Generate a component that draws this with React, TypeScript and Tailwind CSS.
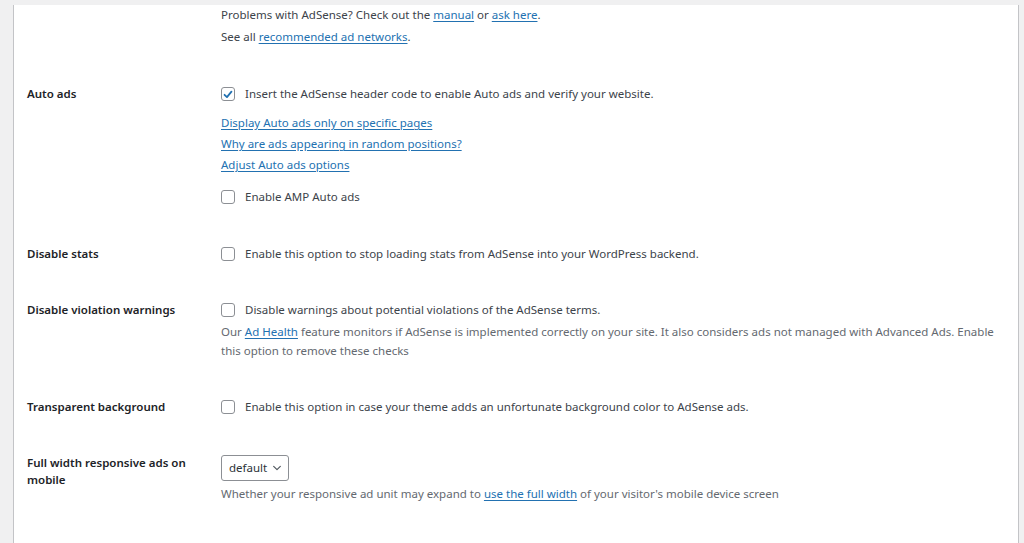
const font = { fontFamily: '"Noto Sans", "Open Sans", sans-serif' };

function Checkbox({ checked = false }: { checked?: boolean }) {
  return (
    <span className="inline-flex h-[14px] w-[14px] shrink-0 items-center justify-center rounded-[3px] border border-[#8c8f94] bg-white">
      {checked && (
        <svg viewBox="0 0 16 16" className="h-[13px] w-[13px]">
          <path d="M3.4 8.4 L6.6 11.4 L12.6 4.2" fill="none" stroke="#2271b1" strokeWidth="2.4" strokeLinecap="round" strokeLinejoin="round" />
        </svg>
      )}
    </span>
  );
}

function CheckLine({ checked, children }: { checked?: boolean; children: React.ReactNode }) {
  return (
    <div className="flex h-[20px] items-center gap-[10px] whitespace-nowrap text-[#3c434a]">
      <Checkbox checked={checked} />
      <span>{children}</span>
    </div>
  );
}

function Link({ children }: { children: React.ReactNode }) {
  return <a className="text-[#2271b1] underline underline-offset-2">{children}</a>;
}

function Row({ label, className, labelClass = "leading-[19px]", children }: { label?: React.ReactNode; className: string; labelClass?: string; children: React.ReactNode }) {
  return (
    <div className={`flex items-start ${className}`}>
      <div className={`w-[194px] shrink-0 pr-4 font-semibold text-[#1d2327] ${labelClass}`}>{label}</div>
      <div className="flex min-w-0 flex-1 flex-col">{children}</div>
    </div>
  );
}

export default function App() {
  return (
    <div className="h-[543px] w-[1024px] overflow-hidden bg-[#f0f0f1] pl-[13px] pr-[5px] text-[11.5px]" style={font}>
      <div className="h-full border-x border-[#c3c4c7] bg-white pl-[13px]">
        {/* intro lines */}
        <Row className="mt-[5px]">
          <p className="leading-[20px] text-[#3c434a]">
            Problems with AdSense? Check out the <Link>manual</Link> or <Link>ask here</Link>.
          </p>
          <p className="mt-[2px] leading-[20px] text-[#3c434a]">
            See all <Link>recommended ad networks</Link>.
          </p>
        </Row>

        {/* Auto ads */}
        <Row label="Auto ads" className="mt-[37px]">
          <CheckLine checked>Insert the AdSense header code to enable Auto ads and verify your website.</CheckLine>
          <div className="mt-[8px] flex flex-col items-start leading-[21px]">
            <Link>Display Auto ads only on specific pages</Link>
            <Link>Why are ads appearing in random positions?</Link>
            <Link>Adjust Auto ads options</Link>
          </div>
          <div className="mt-[12px]">
            <CheckLine>Enable AMP Auto ads</CheckLine>
          </div>
        </Row>

        <Row label="Disable stats" className="mt-[37px]">
          <CheckLine>Enable this option to stop loading stats from AdSense into your WordPress backend.</CheckLine>
        </Row>

        <Row label="Disable violation warnings" className="mt-[36px]">
          <CheckLine>Disable warnings about potential violations of the AdSense terms.</CheckLine>
          <p className="mt-[2px] whitespace-nowrap leading-[19px] text-[#646970]">
            Our <Link>Ad Health</Link> feature monitors if AdSense is implemented correctly on your site. It also considers ads not managed with Advanced Ads. Enable
            <br />
            this option to remove these checks
          </p>
        </Row>

        <Row label="Transparent background" className="mt-[37px]">
          <CheckLine>Enable this option in case your theme adds an unfortunate background color to AdSense ads.</CheckLine>
        </Row>

        <Row
          label={
            <>
              Full width responsive ads on
              <br />
              mobile
            </>
          }
          labelClass="leading-[17px] -mt-[1px]"
          className="mt-[38px]"
        >
          <div className="flex h-[26px] w-[68px] items-center justify-between rounded-[3px] border border-[#8c8f94] bg-white pl-[7px] pr-[6px] text-[#2c3338]">
            <span>default</span>
            <svg viewBox="0 0 12 12" className="h-[10px] w-[10px]">
              <path d="M2 4 L6 8 L10 4" fill="none" stroke="#50575e" strokeWidth="1.4" strokeLinecap="round" strokeLinejoin="round" />
            </svg>
          </div>
          <p className="mt-[3px] leading-[20px] text-[#646970]">
            Whether your responsive ad unit may expand to <Link>use the full width</Link> of your visitor's mobile device screen
          </p>
        </Row>
      </div>
    </div>
  );
}
